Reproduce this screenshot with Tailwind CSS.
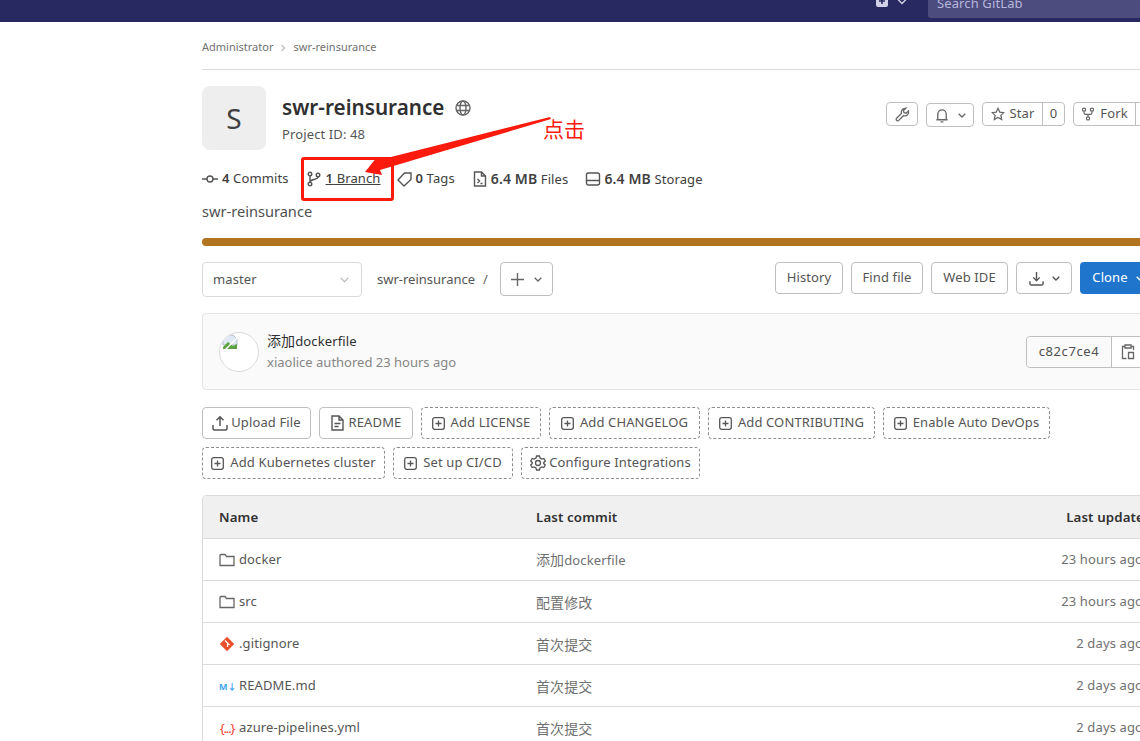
<!DOCTYPE html>
<html lang="zh">
  <head>
    <meta charset="UTF-8" />
    <title>swr-reinsurance</title>
    <script src="https://cdn.jsdelivr.net/npm/@tailwindcss/browser@4"></script>
  </head>
  <body class="bg-white">
    <div class="relative w-[1140px] h-[741px] overflow-hidden font-['Noto_Sans','Noto_Sans_CJK_SC',sans-serif] text-[13px] tracking-[0.12px] text-[#303030]">
      <!-- Top nav -->
      <div class="h-[22px] bg-[#292961] w-[1156px] flex justify-end items-end overflow-hidden">
        <div class="flex items-end h-[22px] mr-[21px]">
          <svg class="w-[12px] h-[12px] mb-[15px]" viewBox="0 0 12 12"><rect width="12" height="12" rx="2" fill="#d1d0e6"/><path d="M6 3v6M3 6h6" stroke="#292961" stroke-width="1.6"/></svg>
          <svg class="w-[10px] h-[6px] ml-[9px] mb-[17px]" viewBox="0 0 10 6" fill="none"><path d="M1 .5l4 4 4-4" stroke="#d1d0e6" stroke-width="1.4"/></svg>
        </div>
        <div class="w-[228px] h-[22px] mb-[4px] bg-[#4c4c7e] rounded-[3px] px-[9px] flex items-end text-[#b8b6dc] leading-[22px] pb-[4px]">Search GitLab</div>
      </div>

      <main class="w-[954px] ml-[202px]">
        <!-- Breadcrumb -->
        <div class="h-[48px] flex items-center gap-[6px] text-[11px] tracking-normal text-[#707070] border-b border-[#dbdbdb] pt-[4px]">
          <span>Administrator</span>
          <svg class="w-[8px] h-[8px]" viewBox="0 0 8 8" fill="none"><path d="M2.5 1l3 3-3 3" stroke="#8f8f8f"/></svg>
          <span>swr-reinsurance</span>
        </div>

        <!-- Project header -->
        <div class="flex justify-between mt-[16px]">
          <div class="flex">
            <div class="w-[64px] h-[64px] rounded-[8px] bg-[#eeeeee] flex items-center justify-center text-[28px] text-[#404040]">S</div>
            <div class="ml-[16px]">
              <div class="flex items-center h-[42px] mt-[1px]">
                <span class="text-[20.700px] tracking-normal font-semibold text-[#303030]">swr-reinsurance</span>
                <svg class="w-[16px] h-[16px] ml-[11px]" viewBox="0 0 16 16" fill="none" stroke="#666" stroke-width="1.4"><circle cx="8" cy="8" r="7"/><ellipse cx="8" cy="8" rx="3" ry="7"/><path d="M1.5 5.5h13M1.5 10.500h13"/></svg>
              </div>
              <div class="text-[#555] leading-[20px] mt-[-5px]">Project ID: 48</div>
            </div>
          </div>
          <div class="flex gap-[8px] mt-[16px] items-start">
            <div class="w-[32px] h-[24px] border border-[#bfbfbf] rounded-[4px] flex items-center justify-center">
              <svg class="w-[15px] h-[15px]" viewBox="0 0 16 16" fill="none" stroke="#666" stroke-width="1.4"><path d="M10.500 1.500a4 4 0 0 0-3.600 5.300L1.700 12a1.600 1.600 0 0 0 2.300 2.300l5.200-5.200a4 4 0 0 0 5.200-5l-2.600 2.500-2.200-.6-.6-2.200 2.500-2.500z"/></svg>
            </div>
            <div class="w-[48px] h-[24px] mt-[1px] border border-[#bfbfbf] rounded-[4px] flex items-center justify-center gap-[9px]">
              <svg class="w-[14px] h-[15px]" viewBox="0 0 14 16" fill="none" stroke="#666" stroke-width="1.4"><path d="M1 12.500h12M2.500 12.500V6.500a4.500 4.500 0 0 1 9 0v6M5.500 14.800h3"/></svg>
              <svg class="w-[8px] h-[5px]" viewBox="0 0 8 5" fill="none"><path d="M.7.7L4 4 7.300.7" stroke="#666" stroke-width="1.300"/></svg>
            </div>
            <div class="flex h-[24px] border border-[#bfbfbf] rounded-[4px] items-center text-[#555]">
              <div class="w-[59px] flex items-center justify-center gap-[5px]">
                <svg class="w-[14px] h-[14px]" viewBox="0 0 16 16" fill="none" stroke="#666" stroke-width="1.4"><path d="M8 1.500l2 4.300 4.700.6-3.400 3.200.9 4.700L8 12l-4.200 2.300.9-4.700L1.300 6.400 6 5.800z"/></svg>
                <span>Star</span>
              </div>
              <div class="w-[22px] h-full border-l border-[#bfbfbf] flex items-center justify-center">0</div>
            </div>
            <div class="flex h-[24px] border border-[#bfbfbf] rounded-[4px] items-center text-[#555]">
              <div class="w-[61px] flex items-center justify-center gap-[5px]">
                <svg class="w-[14px] h-[14px]" viewBox="0 0 16 16" fill="none" stroke="#666" stroke-width="1.4"><circle cx="3.500" cy="3" r="1.800"/><circle cx="12.500" cy="3" r="1.800"/><circle cx="8" cy="13" r="1.800"/><path d="M3.500 5v1.500a2 2 0 0 0 2 2h5a2 2 0 0 0 2-2V5M8 8.500v2.700"/></svg>
                <span>Fork</span>
              </div>
              <div class="w-[20px] h-full border-l border-[#bfbfbf]"></div>
            </div>
          </div>
        </div>

        <!-- Stats -->
        <div class="flex items-center h-[22px] mt-[18px] text-[#404040]">
          <svg class="w-[16px] h-[16px]" viewBox="0 0 16 16" fill="none" stroke="#555" stroke-width="1.4"><circle cx="8" cy="8" r="3"/><path d="M0 8h5M11 8h5"/></svg>
          <span class="ml-[4px]"><b class="font-semibold">4</b> Commits</span>
          <svg class="w-[14px] h-[16px] ml-[18px]" viewBox="0 0 14 16" fill="none" stroke="#555" stroke-width="1.4"><circle cx="3" cy="3" r="1.800"/><circle cx="3" cy="13" r="1.800"/><circle cx="11" cy="4" r="1.800"/><path d="M3 5v6M11 6c0 3-8 2-8 5"/></svg>
          <span class="ml-[5px] underline"><b class="font-semibold">1</b> Branch</span>
          <svg class="w-[16px] h-[16px] ml-[16px]" viewBox="0 0 16 16" fill="none" stroke="#555" stroke-width="1.4"><path d="M1 9l6.500-7H14v6.500l-7 6.500zM11 5h.01"/></svg>
          <span class="ml-[3px]"><b class="font-semibold">0</b> Tags</span>
          <svg class="w-[14px] h-[16px] ml-[18px]" viewBox="0 0 14 16" fill="none" stroke="#555" stroke-width="1.4"><path d="M1.500 1h7l4 4v10h-11zM8.500 1v4h4M4.500 8l2 2-2 2M7.500 12.500h2"/></svg>
          <span class="ml-[4px]"><b class="font-semibold text-[14px]">6.4 MB</b> Files</span>
          <svg class="w-[16px] h-[16px] ml-[17px]" viewBox="0 0 16 16" fill="none" stroke="#555" stroke-width="1.4"><rect x="1.500" y="2" width="13" height="12" rx="2"/><path d="M1.500 9.500h13M10 12h.01M12.500 12h.01"/></svg>
          <span class="ml-[3px]"><b class="font-semibold text-[14px]">6.4 MB</b> Storage</span>
        </div>

        <div class="mt-[11px] leading-[20px] text-[14.600px] tracking-normal text-[#505050]">swr-reinsurance</div>
        <div class="h-[8px] mt-[17px] rounded-full bg-[#b1751f]"></div>

        <!-- Tree controls -->
        <div class="flex justify-between items-start mt-[16px]">
          <div class="flex items-start">
            <div class="w-[160px] h-[35px] border border-[#dbdbdb] rounded-[4px] px-[10px] flex items-center justify-between text-[#555]">
              <span>master</span>
              <svg class="w-[9px] h-[6px] mr-[2px]" viewBox="0 0 9 6" fill="none"><path d="M.8 1l3.700 3.700L8.200 1" stroke="#bbb" stroke-width="1.200"/></svg>
            </div>
            <span class="ml-[15px] w-[98px] whitespace-nowrap h-[34px] leading-[34px] tracking-normal text-[#555]">swr-reinsurance</span>
            <span class="ml-[8px] w-[5px] h-[34px] leading-[34px] text-[#666]">/</span>
            <div class="ml-[12px] w-[53px] h-[34px] border border-[#bfbfbf] rounded-[4px] flex items-center justify-center gap-[10px]">
              <svg class="w-[13px] h-[13px]" viewBox="0 0 13 13" fill="none"><path d="M6.500 0v13M0 6.500h13" stroke="#666" stroke-width="1.400"/></svg>
              <svg class="w-[8px] h-[5px]" viewBox="0 0 8 5" fill="none"><path d="M.7.7L4 4 7.300.7" stroke="#666" stroke-width="1.300"/></svg>
            </div>
          </div>
          <div class="flex gap-[8px] text-[#555]">
            <div class="h-[32px] w-[68px] border border-[#bfbfbf] rounded-[4px] flex items-center justify-center">History</div>
            <div class="h-[32px] w-[72px] border border-[#bfbfbf] rounded-[4px] flex items-center justify-center">Find file</div>
            <div class="h-[32px] w-[77px] border border-[#bfbfbf] rounded-[4px] flex items-center justify-center">Web IDE</div>
            <div class="h-[32px] w-[56px] border border-[#bfbfbf] rounded-[4px] flex items-center justify-center gap-[8px]">
              <svg class="w-[15px] h-[15px]" viewBox="0 0 16 16" fill="none" stroke="#555" stroke-width="1.500"><path d="M8 1v9M4.500 6.800L8 10.300l3.500-3.500M1 11v2.500a1.500 1.500 0 0 0 1.500 1.500h11a1.500 1.500 0 0 0 1.500-1.500V11"/></svg>
              <svg class="w-[8px] h-[5px]" viewBox="0 0 8 5" fill="none"><path d="M.7.7L4 4 7.300.7" stroke="#555" stroke-width="1.300"/></svg>
            </div>
            <div class="h-[32px] w-[76px] rounded-[4px] bg-[#1f75cb] text-white flex items-center justify-center gap-[8px]">
              <span>Clone</span>
              <svg class="w-[8px] h-[5px]" viewBox="0 0 8 5" fill="none"><path d="M.7.7L4 4 7.300.7" stroke="#fff" stroke-width="1.300"/></svg>
            </div>
          </div>
        </div>

        <!-- Last commit -->
        <div class="h-[77px] mt-[16px] bg-[#fafafa] border border-[#e5e5e5] rounded-[4px] flex items-center justify-between pl-[16px] pr-[11px]">
          <div class="flex items-center">
            <div class="relative w-[40px] h-[40px] rounded-full border border-[#dbdbdb] bg-white overflow-hidden">
              <svg class="absolute left-[2px] top-[1px] w-[16px] h-[16px]" viewBox="0 0 16 16"><path d="M1 1h10l4 4v6H1z" fill="#dfe9f5" stroke="#9aa7b5" stroke-width=".7"/><path d="M1 13l5-5 5 4 4-2v5H1z" fill="#5aa340"/><path d="M3 16l12-12" stroke="#fff" stroke-width="1.500"/></svg>
            </div>
            <div class="ml-[8px]">
              <div class="leading-[21px] text-[#303030]"><span class="text-[14px]">添加</span>dockerfile</div>
              <div class="leading-[21px] tracking-normal text-[#868686]">xiaolice authored 23 hours ago</div>
            </div>
          </div>
          <div class="flex h-[32px] border border-[#bfbfbf] rounded-[4px] bg-white text-[#505050] items-center">
            <div class="w-[84px] h-full bg-[#fafafa] rounded-l-[4px] flex items-center justify-center tracking-[0.6px]">c82c7ce4</div>
            <div class="w-[32px] h-full border-l border-[#bfbfbf] flex items-center justify-center">
              <svg class="w-[14px] h-[16px]" viewBox="0 0 14 16" fill="none" stroke="#666" stroke-width="1.300"><path d="M4 2.500H1.500v12h4M10 2.500h2.500V6M4 1h6v3H4zM7.500 8.500h5v6h-5z"/></svg>
            </div>
          </div>
        </div>

        <!-- Action buttons -->
        <div class="flex flex-wrap gap-[8px] mt-[17px] w-[860px] text-[#555]">
          <div class="h-[32px] w-[109px] border border-[#bfbfbf] rounded-[4px] flex items-center justify-center gap-[3px]">
            <svg class="w-[16px] h-[16px]" viewBox="0 0 16 16" fill="none" stroke="#555" stroke-width="1.500"><path d="M8 11V2M4.500 5.200L8 1.700l3.500 3.500M1 10v3.500A1.500 1.500 0 0 0 2.500 15h11a1.500 1.500 0 0 0 1.500-1.500V10"/></svg>
            <span>Upload File</span>
          </div>
          <div class="h-[32px] w-[94px] border border-[#bfbfbf] rounded-[4px] flex items-center justify-center gap-[5px]">
            <svg class="w-[13px] h-[16px]" viewBox="0 0 13 16" fill="none" stroke="#555" stroke-width="1.400"><path d="M1 1h7l4 4v10H1zM8 1v4h4M3.500 8.500h6M3.500 11.500h4"/></svg>
            <span>README</span>
          </div>
          <div class="h-[32px] w-[120px] border border-dashed border-[#8f8f8f] rounded-[4px] flex items-center justify-center gap-[6px]">
            <svg class="w-[13px] h-[13px]" viewBox="0 0 13 13" fill="none" stroke="#555" stroke-width="1.300"><rect x=".7" y=".7" width="11.600" height="11.600" rx="2"/><path d="M6.500 3.500v6M3.500 6.500h6"/></svg>
            <span>Add LICENSE</span>
          </div>
          <div class="h-[32px] w-[151px] border border-dashed border-[#8f8f8f] rounded-[4px] flex items-center justify-center gap-[6px]">
            <svg class="w-[13px] h-[13px]" viewBox="0 0 13 13" fill="none" stroke="#555" stroke-width="1.300"><rect x=".7" y=".7" width="11.600" height="11.600" rx="2"/><path d="M6.500 3.500v6M3.500 6.500h6"/></svg>
            <span>Add CHANGELOG</span>
          </div>
          <div class="h-[32px] w-[167px] border border-dashed border-[#8f8f8f] rounded-[4px] flex items-center justify-center gap-[6px]">
            <svg class="w-[13px] h-[13px]" viewBox="0 0 13 13" fill="none" stroke="#555" stroke-width="1.300"><rect x=".7" y=".7" width="11.600" height="11.600" rx="2"/><path d="M6.500 3.500v6M3.500 6.500h6"/></svg>
            <span>Add CONTRIBUTING</span>
          </div>
          <div class="h-[32px] w-[167px] border border-dashed border-[#8f8f8f] rounded-[4px] flex items-center justify-center gap-[6px]">
            <svg class="w-[13px] h-[13px]" viewBox="0 0 13 13" fill="none" stroke="#555" stroke-width="1.300"><rect x=".7" y=".7" width="11.600" height="11.600" rx="2"/><path d="M6.500 3.500v6M3.500 6.500h6"/></svg>
            <span>Enable Auto DevOps</span>
          </div>
          <div class="h-[32px] w-[183px] border border-dashed border-[#8f8f8f] rounded-[4px] flex items-center justify-center gap-[6px]">
            <svg class="w-[13px] h-[13px]" viewBox="0 0 13 13" fill="none" stroke="#555" stroke-width="1.300"><rect x=".7" y=".7" width="11.600" height="11.600" rx="2"/><path d="M6.500 3.500v6M3.500 6.500h6"/></svg>
            <span>Add Kubernetes cluster</span>
          </div>
          <div class="h-[32px] w-[120px] border border-dashed border-[#8f8f8f] rounded-[4px] flex items-center justify-center gap-[6px]">
            <svg class="w-[13px] h-[13px]" viewBox="0 0 13 13" fill="none" stroke="#555" stroke-width="1.300"><rect x=".7" y=".7" width="11.600" height="11.600" rx="2"/><path d="M6.500 3.500v6M3.500 6.500h6"/></svg>
            <span>Set up CI/CD</span>
          </div>
          <div class="h-[32px] w-[179px] border border-dashed border-[#8f8f8f] rounded-[4px] flex items-center justify-center gap-[3px]">
            <svg class="w-[16px] h-[16px]" viewBox="0 0 16 16" fill="none" stroke="#555" stroke-width="1.300"><path d="M6.500 1h3l.5 2 1.800 1 2-.6 1.500 2.600-1.500 1.400v1.200l1.500 1.400-1.500 2.600-2-.6-1.800 1-.5 2h-3l-.5-2-1.800-1-2 .6L.7 10l1.500-1.400V7.400L.7 6l1.500-2.600 2 .6L6 3z"/><circle cx="8" cy="8" r="2.500"/></svg>
            <span>Configure Integrations</span>
          </div>
        </div>

        <!-- File table -->
        <div class="mt-[16px] border border-[#dbdbdb] rounded-t-[4px] overflow-hidden">
          <div class="h-[43px] bg-[#f0f0f0] border-b border-[#dbdbdb] grid grid-cols-[317px_1fr_auto] items-center pl-[16px] pr-[11px] pt-[2px] font-semibold text-[#303030] text-[13.300px]">
            <span>Name</span><span>Last commit</span><span>Last update</span>
          </div>
          <div class="h-[42px] border-b border-[#dbdbdb] grid grid-cols-[317px_1fr_auto] items-center pl-[16px] pr-[12px] pt-[1px] text-[#707070]">
            <span class="flex items-center gap-[4px] text-[#555]"><svg class="w-[16px] h-[16px]" viewBox="0 0 16 16" fill="none" stroke="#666" stroke-width="1.300"><path d="M1 3.500A1 1 0 0 1 2 2.500h4l1.500 2H15v9H1z"/></svg>docker</span>
            <span><span class="text-[14px]">添加</span>dockerfile</span><span>23 hours ago</span>
          </div>
          <div class="h-[42px] border-b border-[#dbdbdb] grid grid-cols-[317px_1fr_auto] items-center pl-[16px] pr-[12px] pt-[1px] text-[#707070]">
            <span class="flex items-center gap-[4px] text-[#555]"><svg class="w-[16px] h-[16px]" viewBox="0 0 16 16" fill="none" stroke="#666" stroke-width="1.300"><path d="M1 3.500A1 1 0 0 1 2 2.500h4l1.500 2H15v9H1z"/></svg>src</span>
            <span class="text-[14px]">配置修改</span><span>23 hours ago</span>
          </div>
          <div class="h-[42px] border-b border-[#dbdbdb] grid grid-cols-[317px_1fr_auto] items-center pl-[16px] pr-[12px] pt-[1px] text-[#707070]">
            <span class="flex items-center gap-[4px] text-[#555]"><svg class="w-[16px] h-[16px]" viewBox="0 0 16 16"><path d="M8 .8L15.200 8 8 15.200.8 8z" fill="#e8512a"/><path d="M6 4.500l2.500 2.500v4M8.500 7l2 2" stroke="#fff" stroke-width="1.200" fill="none"/></svg>.gitignore</span>
            <span class="text-[14px]">首次提交</span><span>2 days ago</span>
          </div>
          <div class="h-[42px] border-b border-[#dbdbdb] grid grid-cols-[317px_1fr_auto] items-center pl-[16px] pr-[12px] pt-[1px] text-[#707070]">
            <span class="flex items-center gap-[4px] text-[#555]"><span class="w-[16px] text-center text-[9px] font-bold leading-none text-[#42a5f5] whitespace-nowrap">M↓</span>README.md</span>
            <span class="text-[14px]">首次提交</span><span>2 days ago</span>
          </div>
          <div class="h-[42px] border-b border-[#dbdbdb] grid grid-cols-[317px_1fr_auto] items-center pl-[16px] pr-[12px] pt-[1px] text-[#707070]">
            <span class="flex items-center gap-[4px] text-[#555]"><span class="w-[16px] text-center text-[13px] leading-none text-[#f44336] whitespace-nowrap tracking-[-1.200px]">{...}</span>azure-pipelines.yml</span>
            <span class="text-[14px]">首次提交</span><span>2 days ago</span>
          </div>
        </div>
      </main>

      <!-- Red annotation over the screenshot -->
      <div class="absolute left-[301px] top-[157px] w-[93px] h-[44px] border-[3px] border-[#fb1a0c] rounded-[3px]"></div>
      <svg class="absolute left-0 top-0 w-[1140px] h-[741px] pointer-events-none" viewBox="0 0 1140 741">
        <path d="M550 117L379 160L377 157L365 172L382 175L380 170L551 119z" fill="#fb1a0c"/>
      </svg>
      <span class="absolute left-[543px] top-[114px] text-[21px] leading-[28px] text-[#fb1a0c] font-['Noto_Sans_CJK_SC',sans-serif]">点击</span>
    </div>
  </body>
</html>
